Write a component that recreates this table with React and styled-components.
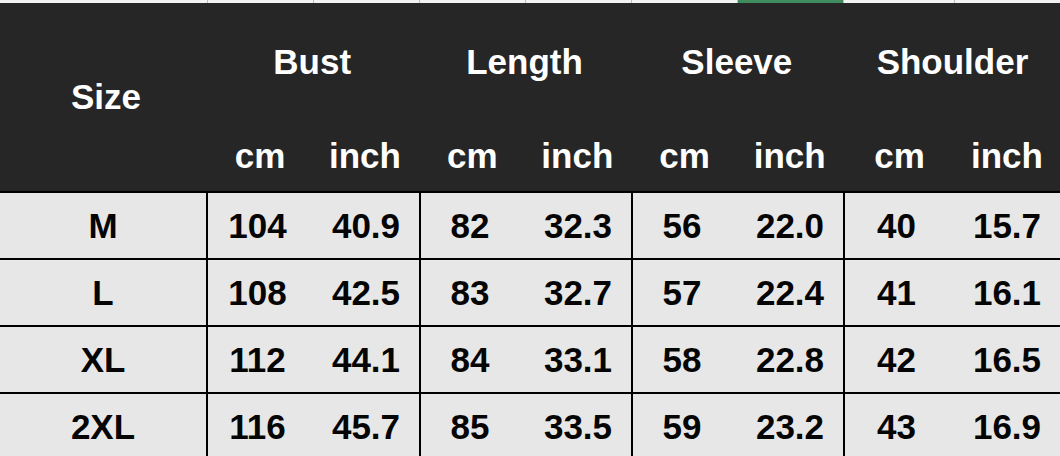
import React from "react";
import styled, { createGlobalStyle } from "styled-components";

const GlobalStyle = createGlobalStyle`
  html, body {
    margin: 0;
    padding: 0;
    background: #e7e7e7;
  }
  body {
    font-family: "Liberation Sans", Arial, sans-serif;
  }
`;

const COLS = "206px 107px 106px 106px 106px 106px 106px 111px 106px";

const Sheet = styled.div`
  width: 1060px;
  height: 456px;
  overflow: hidden;
  font-family: "Liberation Sans", Arial, sans-serif;
  font-weight: 700;
`;

const TopStrip = styled.div`
  display: grid;
  grid-template-columns: 207px 106px 106px 106px 106px 106px 106px 111px 106px;
  height: 3px;
  background: #f2f2f2;
`;

const StripCell = styled.div`
  border-left: ${p => (p.$first ? "none" : "1px solid #bdbdbd")};
  background: ${p => (p.$selected ? "#3f8d5f" : "transparent")};
`;

const Header = styled.div`
  display: grid;
  grid-template-columns: 206px 1fr 1fr 1fr 1fr;
  grid-template-rows: 118px 70px;
  background: #262626;
  color: #ffffff;
  font-size: 35px;
`;

const SizeHead = styled.div`
  grid-row: 1 / span 2;
  display: flex;
  align-items: center;
  justify-content: center;
  padding-left: 6px;
`;

const GroupHead = styled.div`
  display: flex;
  align-items: center;
  justify-content: center;
  padding-left: ${p => (p.$wide ? "2px" : "0")};
`;

const UnitRow = styled.div`
  display: grid;
  grid-template-columns: ${p => (p.$wide ? "111px 106px" : "106px 106px")};
  align-items: center;
`;

const Unit = styled.div`
  text-align: center;
  padding-left: ${p => (p.$first ? "2px" : "0")};
`;

const Row = styled.div`
  display: grid;
  grid-template-columns: ${COLS};
  height: ${p => (p.$last ? "64px" : "67px")};
  padding-top: ${p => (p.$last ? "4px" : "0")};
  border-top: 2px solid #000;
  box-sizing: border-box;
  background: #e7e7e7;
  color: #050505;
  font-size: 35px;
`;

const Cell = styled.div`
  display: flex;
  align-items: center;
  justify-content: center;
  box-sizing: border-box;
  border-left: ${p => (p.$group ? "2px solid #000" : "none")};
  padding-right: ${p => (p.$group ? "6px" : "0")};
  margin-top: ${p => (p.$last && p.$group ? "-4px" : "0")};
  padding-top: ${p => (p.$last && p.$group ? "4px" : "0")};
`;

const groups = ["Bust", "Length", "Sleeve", "Shoulder"];

const rows = [
  { size: "M", values: ["104", "40.9", "82", "32.3", "56", "22.0", "40", "15.7"] },
  { size: "L", values: ["108", "42.5", "83", "32.7", "57", "22.4", "41", "16.1"] },
  { size: "XL", values: ["112", "44.1", "84", "33.1", "58", "22.8", "42", "16.5"] },
  { size: "2XL", values: ["116", "45.7", "85", "33.5", "59", "23.2", "43", "16.9"] }
];

const App = () => {
  return (
    <Sheet>
      <GlobalStyle />
      <TopStrip>
        {Array.from({ length: 9 }).map((_, i) => (
          <StripCell key={i} $first={i === 0} $selected={i === 6} />
        ))}
      </TopStrip>
      <Header>
        <SizeHead>Size</SizeHead>
        {groups.map((g, i) => (
          <GroupHead key={g} $wide={i === 3}>
            {g}
          </GroupHead>
        ))}
        {groups.map((g, i) => (
          <UnitRow key={g + "-u"} $wide={i === 3}>
            <Unit $first>cm</Unit>
            <Unit>inch</Unit>
          </UnitRow>
        ))}
      </Header>
      {rows.map((r, ri) => {
        const last = ri === rows.length - 1;
        return (
          <Row key={r.size} $last={last}>
            <Cell>{r.size}</Cell>
            {r.values.map((v, i) => (
              <Cell key={i} $group={i % 2 === 0} $last={last}>
                {v}
              </Cell>
            ))}
          </Row>
        );
      })}
    </Sheet>
  );
};

export default App;
